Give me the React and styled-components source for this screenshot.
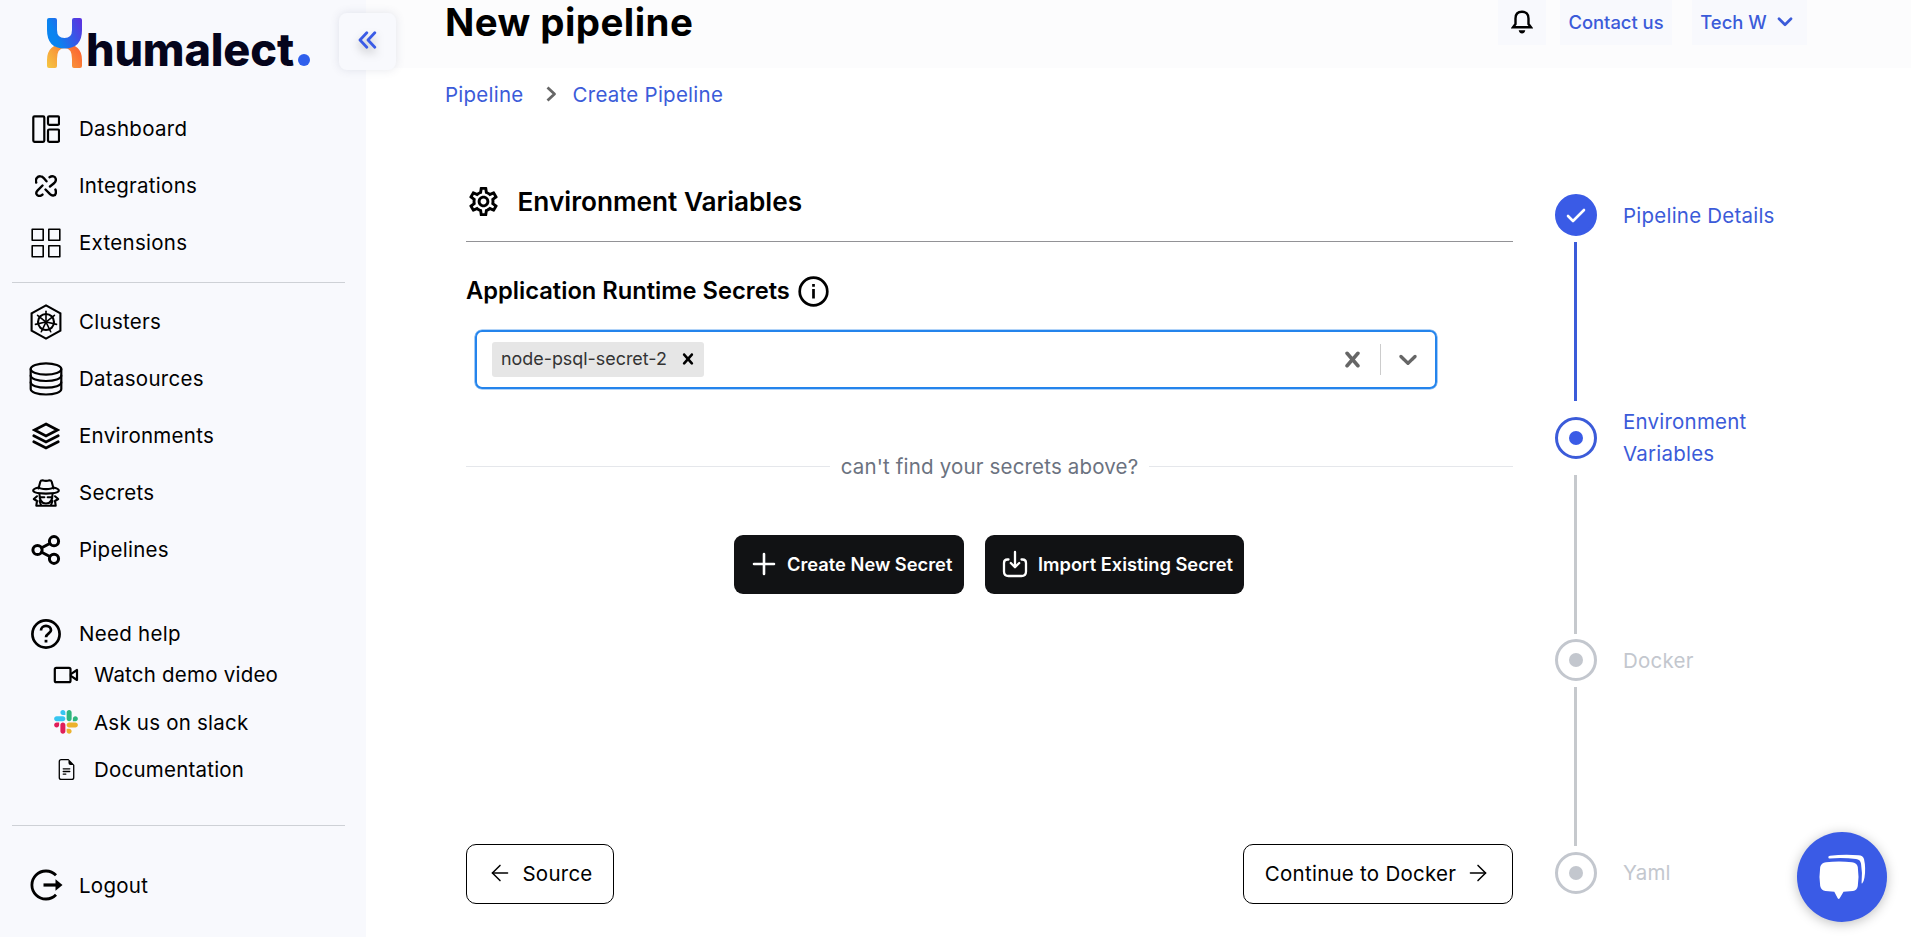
import React from "react";
import styled, { createGlobalStyle } from "styled-components";
import { MdOutlineSettings } from "react-icons/md";
import { BsFileEarmarkText } from "react-icons/bs";
import { ArrowLeft, ArrowRight } from "lucide-react";

const blue = "#3a5be6";
const linkBlue = "#3b5bd9";
const muted = "#c3c7ce";

const GlobalStyle = createGlobalStyle`
  * { box-sizing: border-box; }
  body {
    margin: 0;
    background: #fff;
    color: #000;
    font-family: Inter, "Liberation Sans", sans-serif;
    overflow: hidden;
  }
  svg { display: block; flex: none; }
`;

const Page = styled.div`
  display: flex;
  width: 1911px;
  height: 937px;
  position: relative;
`;

/* ---------- sidebar ---------- */
const Sidebar = styled.aside`
  width: 366px;
  flex: none;
  background: #f8f9fd;
  display: flex;
  flex-direction: column;
`;
const Logo = styled.div`
  height: 100px;
  padding: 18px 0 0 46px;
  display: flex;
  align-items: flex-start;
`;
const Wordmark = styled.span`
  width: 211px;
  margin: 2px 0 0 3px;
  font-size: 45px;
  line-height: 60px;
  font-weight: 800;
  letter-spacing: -0.15px;
  color: #05051c;
`;
const LogoDot = styled.i`
  width: 12px;
  height: 12px;
  margin: 36px 0 0 1px;
  border-radius: 50%;
  background: #2f5fec;
`;
const NavItem = styled.a`
  height: ${(p) => p.$height || 57}px;
  display: flex;
  align-items: center;
  font-size: 20.5px;
  letter-spacing: 0.28px;
`;
const NavIcon = styled.span`
  width: 64px;
  margin: 0 1px 0 14px;
  display: flex;
  justify-content: center;
`;
const SubItem = styled(NavItem)`
  height: 47.5px;
  letter-spacing: 0.22px;
`;
const SubIcon = styled.span`
  width: 40px;
  margin: 0 8px 0 46px;
  display: flex;
  justify-content: center;
`;
const Rule = styled.hr`
  width: 333px;
  height: 1px;
  border: 0;
  margin: ${(p) => p.$margin};
  background: #ced1d6;
`;
const HelpGroup = styled.div`
  margin-top: 38.8px;
`;
const Collapse = styled.button`
  position: absolute;
  left: 339px;
  top: 13px;
  width: 57px;
  height: 57px;
  padding: 0 0 3px;
  border: 0;
  border-radius: 8px;
  background: #f8f9fd;
  box-shadow: 0 0 10px rgba(60, 70, 110, 0.13);
  display: flex;
  align-items: center;
  justify-content: center;
  svg { filter: drop-shadow(0 5px 4px rgba(0, 0, 0, 0.25)); }
`;

/* ---------- main column ---------- */
const Main = styled.main`
  flex: 1;
  display: flex;
  flex-direction: column;
`;
const Header = styled.header`
  height: 68px;
  padding: 0 104px 0 79px;
  background: #fcfcfd;
  display: flex;
  justify-content: space-between;
`;
const Title = styled.h1`
  margin: -2px 0 0;
  font-size: 38.5px;
  line-height: 48px;
  font-weight: 750;
  letter-spacing: 0.42px;
`;
const Actions = styled.div`
  display: flex;
`;
const HeaderButton = styled.button`
  height: 45px;
  width: ${(p) => p.$width}px;
  margin-left: ${(p) => p.$gap || 0}px;
  padding: 0 ${(p) => p.$shift || 0}px 1.5px 0;
  border: 0;
  background: #f8f9fd;
  color: ${(p) => (p.$dark ? "#000" : linkBlue)};
  font: 500 18.4px Inter, sans-serif;
  display: flex;
  align-items: center;
  justify-content: center;
  gap: 10px;
`;
const Crumbs = styled.nav`
  height: 54px;
  padding: 0 0 2px 79px;
  display: flex;
  align-items: center;
  font-size: 20.5px;
  letter-spacing: 0.25px;
  color: ${linkBlue};
  svg { margin: 0 16px 0 22px; }
`;
const Body = styled.div`
  display: flex;
  padding: 58px 0 0 100px;
`;
const Form = styled.section`
  width: 1047px;
  height: 724px;
  display: flex;
  flex-direction: column;
`;
const SectionHead = styled.div`
  height: 62px;
  display: flex;
  align-items: center;
  gap: 16.5px;
  padding-bottom: 18px;
  border-bottom: 1px solid #929296;
`;
const SectionTitle = styled.h2`
  margin: -1px 0 0;
  font-size: 26.2px;
  font-weight: 600;
`;
const Label = styled.div`
  margin-top: 33px;
  height: 32px;
  display: flex;
  align-items: center;
  gap: 8px;
  font-size: 23.7px;
  font-weight: 600;
  line-height: 30px;
`;
const Select = styled.div`
  margin: 22.5px 0 0 9px;
  width: 962px;
  height: 59.5px;
  border: 2px solid #2484ec;
  box-shadow: 0 0 0 0.6px rgba(36, 132, 236, 0.7);
  border-radius: 7px;
  display: flex;
  align-items: center;
  padding: 0 12px 0 15px;
`;
const Tag = styled.span`
  width: 212px;
  height: 35px;
  padding: 0 5.5px 1px 9px;
  border-radius: 3px;
  background: #e6e6e6;
  color: #333;
  font-size: 17.9px;
  display: flex;
  align-items: center;
  justify-content: space-between;
  svg { color: #000; }
`;
const Indicators = styled.div`
  margin-left: auto;
  display: flex;
  align-items: center;
  color: #666;
`;
const Separator = styled.span`
  width: 1px;
  height: 31px;
  margin: 0 12px;
  background: #ccc;
`;
const Divider = styled.div`
  margin-top: 61px;
  height: 32px;
  display: flex;
  align-items: center;
  gap: 11px;
  color: #6b7280;
  font-size: 20.5px;
  letter-spacing: 0.17px;
  &::before, &::after {
    content: "";
    flex: 1;
    height: 1px;
    background: #e5e7eb;
  }
`;
const SecretActions = styled.div`
  margin: 53px 0 0 268px;
  display: flex;
  gap: 21px;
`;
const DarkButton = styled.button`
  width: ${(p) => p.$width}px;
  height: 59px;
  padding: 0 0 2px 17px;
  border: 0;
  border-radius: 9px;
  background: #111214;
  color: #fff;
  font: 600 18.3px Inter, sans-serif;
  white-space: nowrap;
  display: flex;
  align-items: center;
  gap: 10px;
`;
const Footer = styled.div`
  margin-top: auto;
  display: flex;
  justify-content: space-between;
`;
const OutlineButton = styled.button`
  width: ${(p) => p.$width}px;
  height: 60px;
  padding: 0 0 2px;
  border: 1px solid #000;
  border-radius: 10px;
  background: #fff;
  color: #000;
  font: 400 20.5px Inter, sans-serif;
  letter-spacing: 0.25px;
  display: flex;
  align-items: center;
  justify-content: center;
  gap: 9px;
`;

/* ---------- stepper ---------- */
const Stepper = styled.ol`
  list-style: none;
  margin: 14px 0 0 42px;
  padding: 0;
`;
const Step = styled.li`
  display: flex;
  align-items: flex-start;
  gap: 26px;
  color: ${(p) => (p.$active ? linkBlue : muted)};
  font-size: 20.5px;
  letter-spacing: 0.22px;
  line-height: 32px;
`;
const Track = styled.div`
  width: 42px;
  display: flex;
  flex-direction: column;
  align-items: center;
`;
const Marker = styled.span`
  width: 42px;
  height: 42px;
  border-radius: 50%;
  border: 3px solid ${(p) => (p.$done ? blue : p.$active ? linkBlue : muted)};
  background: ${(p) => (p.$done ? blue : "#fff")};
  display: flex;
  align-items: center;
  justify-content: center;
`;
const Dot = styled.i`
  width: 14px;
  height: 14px;
  border-radius: 50%;
  background: ${(p) => (p.$active ? blue : muted)};
`;
const Connector = styled.span`
  width: 3px;
  height: 159px;
  margin: ${(p) => p.$margin};
  background: ${(p) => (p.$active ? linkBlue : "#c6c9cd")};
`;
const StepLabel = styled.span`
  margin-top: ${(p) => (p.$lines === 2 ? -11 : p.$drop || 5)}px;
  width: 160px;
`;

const ChatButton = styled.button`
  position: absolute;
  left: 1797px;
  top: 832px;
  width: 90px;
  height: 90px;
  padding: 0;
  border: 0;
  border-radius: 50%;
  background: ${blue};
  box-shadow: 0 2px 12px rgba(0, 0, 0, 0.25);
  display: flex;
  align-items: center;
  justify-content: center;
`;

/* ---------- drawings ---------- */
const Line = ({ w, h, sw = 2, children, ...rest }) => (
  <svg width={w} height={h} viewBox={`0 0 ${w} ${h}`} fill="none" stroke="currentColor" strokeWidth={sw} strokeLinecap="round" strokeLinejoin="round" {...rest}>
    {children}
  </svg>
);

const LogoMark = () => (
  <svg width="37" height="50" viewBox="0 0 37 50">
    <defs>
      <linearGradient id="lgTop" x1="0" y1="0.6" x2="1" y2="0.2">
        <stop offset="0.2" stopColor="#0a84f0" />
        <stop offset="1" stopColor="#5a35e0" />
      </linearGradient>
      <linearGradient id="lgBottom" x1="0" y1="1" x2="1" y2="0.5">
        <stop offset="0" stopColor="#f5c842" />
        <stop offset="1" stopColor="#fb6a33" />
      </linearGradient>
    </defs>
    <path fill="url(#lgBottom)" d="M1 48V42Q1 26 18.5 26T36 42V48Q36 50 34 50H28Q26 50 26 48V41Q26 30 18.5 30T11 41V48Q11 50 9 50H3Q1 50 1 48Z" />
    <path fill="url(#lgTop)" d="M1 2Q1 0 3 0H9Q11 0 11 2V12Q11 20 18.5 20T26 12V2Q26 0 28 0H34Q36 0 36 2V12Q36 30.5 18.5 30.5T1 12Z" />
  </svg>
);
const DashboardIcon = () => (
  <Line w={28} h={28} sw={2.2}>
    <rect x="1.3" y="1.3" width="11" height="25.5" rx="1.2" />
    <rect x="16" y="1.3" width="11" height="8.5" rx="1.2" />
    <rect x="16" y="14.5" width="11" height="12.3" rx="1.2" />
  </Line>
);
const IntegrationsIcon = () => (
  <Line w={22} h={22} sw={2.4}>
    <path d="M1.2 7.5C0 4 2.5 1.1 5.5 1.2c1.2 0 2 .6 3 1.6L11.5 6.3" />
    <path d="M14.5 2.2C17 .6 20.3 1.2 20.8 4c.3 2-.5 3-1.5 4L15 11.5" />
    <path d="M7.5 10.5L2.7 15.3C0 18 1.5 21 4.5 20.9c1.2 0 2-.4 3-1.3" />
    <path d="M10.5 14.5L15 19.2C17.5 21.6 20.7 20.7 20.9 17.5c.1-1.5-.1-2-.5-3" />
  </Line>
);
const ExtensionsIcon = () => (
  <Line w={30} h={30} sw={1.6}>
    <rect x="1.2" y="1.2" width="11" height="11" />
    <rect x="17.8" y="1.2" width="11" height="11" />
    <rect x="1.2" y="17.8" width="11" height="11" />
    <rect x="17.8" y="17.8" width="11" height="11" />
  </Line>
);
const ClustersIcon = () => (
  <Line w={32} h={36} sw={2.1}>
    <path d="M16 1.4L30.4 9.4V26.6L16 34.6L1.6 26.6V9.4Z" strokeLinejoin="miter" />
    <circle cx="16" cy="18" r="8" />
    <circle cx="16" cy="18" r="1.6" fill="currentColor" stroke="none" />
    <g strokeWidth="1.6">
      {[0, 1, 2, 3, 4, 5, 6].map((i) => (
        <path key={i} d="M16 16.5V7.2" transform={`rotate(${(i * 360) / 7} 16 18)`} />
      ))}
    </g>
  </Line>
);
const DatasourcesIcon = () => (
  <Line w={34} h={34} sw={2.2}>
    <ellipse cx="17" cy="7" rx="15.3" ry="5.6" />
    <path d="M1.7 7V27C1.7 30.2 8.5 32.5 17 32.5S32.3 30.2 32.3 27V7" />
    <path d="M1.7 13.5C1.7 16.7 8.5 19 17 19S32.3 16.7 32.3 13.5M1.7 20.3C1.7 23.5 8.5 25.7 17 25.7S32.3 23.5 32.3 20.3" />
  </Line>
);
const EnvironmentsIcon = () => (
  <Line w={28} h={28} sw={2.8} strokeLinejoin="miter">
    <path d="M14 2L25.5 8L14 14L2.5 8Z" />
    <path d="M1.8 13.8L14 20L26.2 13.8M1.8 19.8L14 26L26.2 19.8" />
  </Line>
);
const SecretsIcon = () => (
  <Line w={28} h={28} sw={2.1}>
    <path d="M6.5 9.5L8.3 2.7Q8.7 1.2 10.5 1.2Q14 2.6 17.5 1.2Q19.3 1.2 19.7 2.7L21.5 9.5" />
    <path d="M6.5 8.5C3 9.3 1.2 10.5 1.2 11.6C1.2 13.7 6.8 14.6 14 14.6S26.8 13.7 26.8 11.6C26.8 10.5 25 9.3 21.5 8.5C19 10.6 9 10.6 6.5 8.5" />
    <path d="M7.5 15.5C7.5 21.5 10 24.5 14 24.5S20.5 21.5 20.5 15.500M9 18.2H12.3M15.7 18.2H19" />
    <path d="M5 17.3L1.8 20L5 22L4.3 26.7H23.7L23 22L26.2 20L23 17.3M7.5 22L9 26M20.5 22L19 26" />
  </Line>
);
const PipelinesIcon = () => (
  <Line w={30} h={30} sw={3}>
    <circle cx="6.5" cy="15" r="4.6" />
    <circle cx="23" cy="6.2" r="4.6" />
    <circle cx="23" cy="23.8" r="4.6" />
    <path d="M10.7 12.8L18.8 8.5M10.7 17.2L18.8 21.5" />
  </Line>
);
const HelpIcon = () => (
  <Line w={30} h={30} sw={2.7}>
    <circle cx="15" cy="15" r="13.6" />
    <path d="M10 11.5C10 8.7 12.2 6.9 15 6.9S20 8.7 20 11.3C20 14.2 15 14.6 15 18.3" strokeLinecap="butt" />
    <path d="M15 20.8V23.5" strokeLinecap="butt" strokeWidth="2.8" />
  </Line>
);
const VideoIcon = () => (
  <Line w={26} h={18} sw={2.2}>
    <rect x="1.8" y="1.8" width="15.7" height="14.4" rx="1.5" />
    <path d="M17.8 8.2L24 4V14L17.8 9.8" />
  </Line>
);
const SlackIcon = () => (
  <svg width="24" height="24" viewBox="0 0 127 127">
    <path fill="#E01E5A" d="M27.2 80c0 7.3-5.9 13.2-13.2 13.2C6.7 93.2.8 87.3.8 80c0-7.3 5.9-13.2 13.2-13.2h13.2V80zm6.6 0c0-7.3 5.9-13.2 13.2-13.2 7.3 0 13.2 5.9 13.2 13.2v33c0 7.3-5.9 13.2-13.2 13.2-7.3 0-13.2-5.9-13.2-13.2V80z" />
    <path fill="#36C5F0" d="M47 27c-7.3 0-13.2-5.9-13.2-13.2C33.8 6.5 39.7.6 47 .6c7.3 0 13.2 5.9 13.2 13.2V27H47zm0 6.7c7.3 0 13.2 5.9 13.2 13.2 0 7.3-5.9 13.2-13.2 13.2H13.9C6.6 60.1.7 54.2.7 46.9c0-7.3 5.9-13.2 13.2-13.2H47z" />
    <path fill="#2EB67D" d="M99.9 46.9c0-7.3 5.9-13.2 13.2-13.2 7.3 0 13.2 5.9 13.2 13.2 0 7.3-5.9 13.2-13.2 13.2H99.9V46.9zm-6.6 0c0 7.3-5.9 13.2-13.2 13.2-7.3 0-13.2-5.9-13.2-13.2V13.8C66.9 6.5 72.8.6 80.1.6c7.3 0 13.2 5.9 13.2 13.2v33.1z" />
    <path fill="#ECB22E" d="M80.1 99.8c7.3 0 13.2 5.9 13.2 13.2 0 7.3-5.9 13.2-13.2 13.2-7.3 0-13.2-5.9-13.2-13.2V99.8h13.2zm0-6.6c-7.3 0-13.2-5.9-13.2-13.2 0-7.3 5.9-13.2 13.2-13.2h33.1c7.3 0 13.2 5.9 13.2 13.2 0 7.3-5.9 13.2-13.2 13.2H80.1z" />
  </svg>
);
const LogoutIcon = () => (
  <Line w={34} h={32} sw={2.8} strokeLinecap="butt">
    <path d="M27 6.3A14 14 0 1 0 27 25.7" />
    <path d="M14.5 16H28" strokeWidth="3.2" />
    <path d="M26.5 10.2L33.5 16L26.5 21.8Z" fill="currentColor" stroke="none" />
  </Line>
);
const BellIcon = () => (
  <Line w={22} h={24} sw={2.4} strokeLinejoin="miter">
    <path d="M2 17.3H20L17.5 14V8.5C17.5 4 15 1.8 11 1.8S4.5 4 4.5 8.5V14Z" />
    <path d="M7.7 20.3H14.3Q13.5 23.5 11 23.5T7.7 20.3Z" fill="currentColor" stroke="none" />
  </Line>
);
const InfoIcon = () => (
  <Line w={31} h={31} sw={2.7} strokeLinecap="butt">
    <circle cx="15.5" cy="15.5" r="13.8" />
    <path d="M15.5 13V22.5M15.5 8V10.7" />
  </Line>
);
const CrossGlyph = ({ size }) => (
  <svg width={size} height={size} viewBox="0 0 20 20" fill="currentColor">
    <path d="M14.348 14.849c-0.469 0.469-1.229 0.469-1.697 0l-2.651-3.030-2.651 3.029c-0.469 0.469-1.229 0.469-1.697 0-0.469-0.469-0.469-1.229 0-1.697l2.758-3.150-2.759-3.152c-0.469-0.469-0.469-1.228 0-1.697s1.228-0.469 1.697 0l2.652 3.031 2.651-3.031c0.469-0.469 1.228-0.469 1.697 0s0.469 1.229 0 1.697l-2.758 3.152 2.758 3.150c0.469 0.469 0.469 1.229 0 1.698z" />
  </svg>
);
const DownGlyph = ({ size }) => (
  <svg width={size} height={size} viewBox="0 0 20 20" fill="currentColor">
    <path d="M4.516 7.548c0.436-0.446 1.043-0.481 1.576 0l3.908 3.747 3.908-3.747c0.533-0.481 1.141-0.446 1.574 0 0.436 0.445 0.408 1.197 0 1.615-0.406 0.418-4.695 4.502-4.695 4.502-0.217 0.223-0.502 0.335-0.787 0.335s-0.570-0.112-0.789-0.335c0 0-4.287-4.084-4.695-4.502s-0.436-1.170 0-1.615z" />
  </svg>
);
const ImportIcon = () => (
  <Line w={26} h={28} sw={2.3}>
    <path d="M6.5 9.5H5.5Q2 9.5 2 13V21.5Q2 26 6.5 26H19.5Q24 26 24 21.5V13Q24 9.5 20.5 9.5H19.5" />
    <path d="M13 2V16.5M8.8 13L13 17.2L17.2 13" />
  </Line>
);
const ChatIcon = () => (
  <svg width="48" height="46" viewBox="0 0 48 46" fill="#fff">
    <path d="M8 8.2Q21 7 34 8.2Q38.8 8.6 39.8 13Q41.2 22.5 39.8 32Q39 36.3 35 37L25.5 37.8L21.7 44.3Q20.7 45.8 19.7 44.3L16.3 37.8L7.5 37Q3.2 36.5 2.2 32Q.8 22.5 2.2 13Q3.2 8.7 8 8.2Z" />
    <path d="M10.3 3Q10.3 2 12 1.7Q26 0 40.5 1.2Q45 1.5 46 5Q48 14 46.5 23.5Q45.7 28 44.3 29.3Q43.5 30 43.6 28.5Q44.5 18 43 9.5Q42.2 5.6 38 5.1Q26 3.5 11.5 4.5Q10.3 4.5 10.3 3Z" />
  </svg>
);

const primary = [
  ["Dashboard", DashboardIcon],
  ["Integrations", IntegrationsIcon],
  ["Extensions", ExtensionsIcon],
];
const resources = [
  ["Clusters", ClustersIcon],
  ["Datasources", DatasourcesIcon],
  ["Environments", EnvironmentsIcon],
  ["Secrets", SecretsIcon],
  ["Pipelines", PipelinesIcon],
];

const Nav = ({ label, Icon, height }) => (
  <NavItem $height={height}>
    <NavIcon><Icon /></NavIcon>
    {label}
  </NavItem>
);

export default function App() {
  return (
    <Page>
      <GlobalStyle />
      <Sidebar>
        <Logo>
          <LogoMark />
          <Wordmark>humalect</Wordmark>
          <LogoDot />
        </Logo>
        {primary.map(([label, Icon]) => <Nav key={label} label={label} Icon={Icon} />)}
        <Rule $margin="11px 0 10px 12px" />
        {resources.map(([label, Icon]) => <Nav key={label} label={label} Icon={Icon} />)}
        <HelpGroup>
          <Nav label="Need help" Icon={HelpIcon} height={34} />
          <SubItem><SubIcon><VideoIcon /></SubIcon>Watch demo video</SubItem>
          <SubItem><SubIcon><SlackIcon /></SubIcon>Ask us on slack</SubItem>
          <SubItem><SubIcon><BsFileEarmarkText size={21} /></SubIcon>Documentation</SubItem>
        </HelpGroup>
        <Rule $margin="31.7px 0 31px 12px" />
        <Nav label="Logout" Icon={LogoutIcon} />
      </Sidebar>
      <Main>
        <Header>
          <Title>New pipeline</Title>
          <Actions>
            <HeaderButton $width={48} $dark><BellIcon /></HeaderButton>
            <HeaderButton $width={112} $gap={14}>Contact us</HeaderButton>
            <HeaderButton $width={115} $gap={20} $shift={6}>
              Tech W
              <Line w={16} h={10} sw={2.7}><path d="M2 1.8L8 7.8L14 1.8" /></Line>
            </HeaderButton>
          </Actions>
        </Header>
        <Crumbs>
          Pipeline
          <Line w={11} h={16} sw={2.8} stroke="#666" strokeLinecap="butt"><path d="M1.5 1.5L8.5 8L1.5 14.5" /></Line>
          Create Pipeline
        </Crumbs>
        <Body>
          <Form>
            <SectionHead>
              <MdOutlineSettings size={35} />
              <SectionTitle>Environment Variables</SectionTitle>
            </SectionHead>
            <Label>Application Runtime Secrets<InfoIcon /></Label>
            <Select>
              <Tag>node-psql-secret-2<CrossGlyph size={22} /></Tag>
              <Indicators>
                <CrossGlyph size={31} />
                <Separator />
                <DownGlyph size={30} />
              </Indicators>
            </Select>
            <Divider>can't find your secrets above?</Divider>
            <SecretActions>
              <DarkButton $width={230}>
                <Line w={26} h={26} sw={2.6}><path d="M13 3V23M3 13H23" /></Line>
                Create New Secret
              </DarkButton>
              <DarkButton $width={259}><ImportIcon />Import Existing Secret</DarkButton>
            </SecretActions>
            <Footer>
              <OutlineButton $width={148}><ArrowLeft size={26} strokeWidth={1.4} />Source</OutlineButton>
              <OutlineButton $width={270}>Continue to Docker<ArrowRight size={26} strokeWidth={1.4} /></OutlineButton>
            </Footer>
          </Form>
          <Stepper>
            <Step $active>
              <Track>
                <Marker $done>
                  <Line w={20} h={15} sw={2.6} stroke="#fff"><path d="M2 8L7 13L18 2" /></Line>
                </Marker>
                <Connector $active $margin="6px 1px 16px 0" />
              </Track>
              <StepLabel $drop={6}>Pipeline Details</StepLabel>
            </Step>
            <Step $active>
              <Track>
                <Marker $active><Dot $active /></Marker>
                <Connector $margin="16px 1px 5px 0" />
              </Track>
              <StepLabel $lines={2}>Environment Variables</StepLabel>
            </Step>
            <Step>
              <Track>
                <Marker><Dot /></Marker>
                <Connector $margin="6px 1px 6px 0" />
              </Track>
              <StepLabel $drop={6}>Docker</StepLabel>
            </Step>
            <Step>
              <Track><Marker><Dot /></Marker></Track>
              <StepLabel>Yaml</StepLabel>
            </Step>
          </Stepper>
        </Body>
      </Main>
      <Collapse>
        <Line w={19} h={18} sw={2.8} stroke={blue}><path d="M8.8 1.8L2 9L8.8 16.2M16.8 1.8L10 9L16.8 16.2" /></Line>
      </Collapse>
      <ChatButton><ChatIcon /></ChatButton>
    </Page>
  );
}
